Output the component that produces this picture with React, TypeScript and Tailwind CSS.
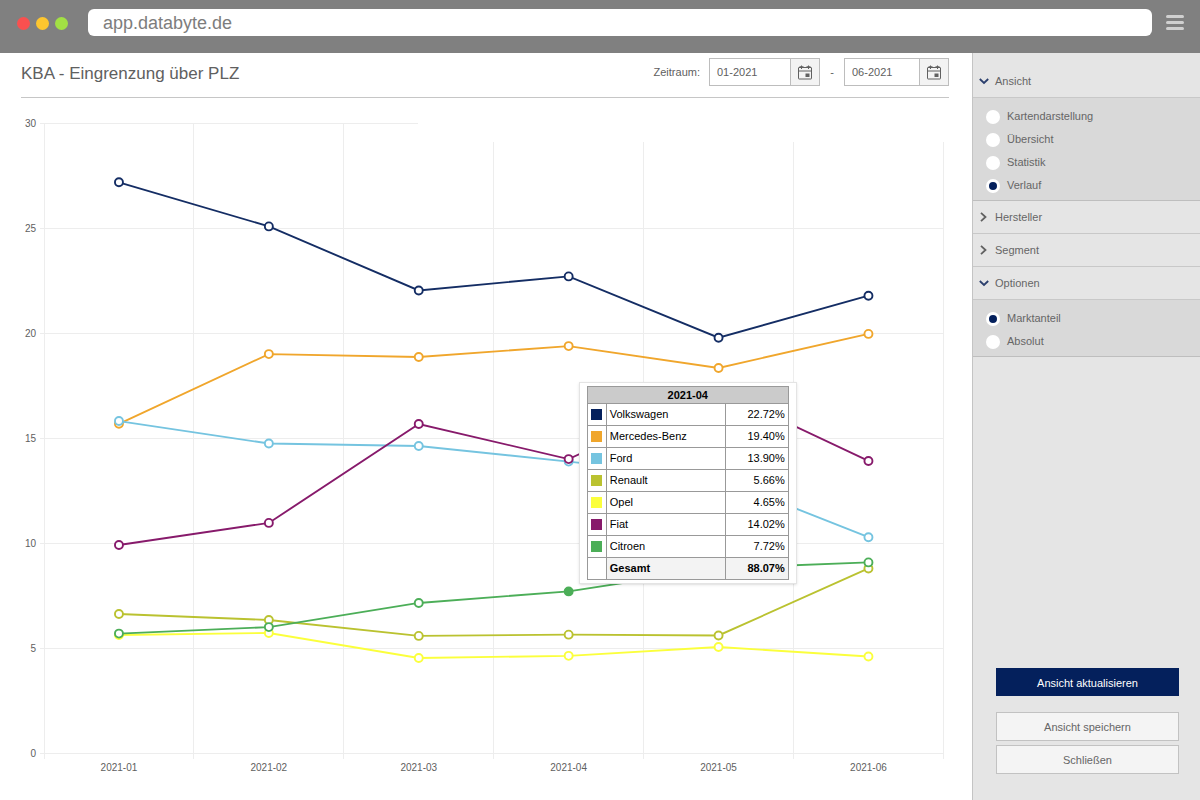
import { useState } from "react";

/**
 * Registration share per brand and month, with the view settings on the right.
 */

const MONTHS = ["2021-01", "2021-02", "2021-03", "2021-04", "2021-05", "2021-06"];
const TICKS = [0, 5, 10, 15, 20, 25, 30];
const ACTIVE_MONTH = 3;

type Series = {
  name: string;
  color: string;
  line?: string;
  values: number[];
};

const SERIES: Series[] = [
  { name: "Volkswagen", color: "#04205c", line: "#142d64", values: [27.2, 25.1, 22.05, 22.72, 19.8, 21.8] },
  { name: "Mercedes-Benz", color: "#f0a62c", values: [15.7, 19.02, 18.88, 19.4, 18.36, 19.98] },
  { name: "Ford", color: "#75c4e0", values: [15.83, 14.76, 14.64, 13.9, 13.12, 10.3] },
  { name: "Renault", color: "#bac230", values: [6.64, 6.36, 5.6, 5.66, 5.62, 8.81] },
  { name: "Opel", color: "#fbff3c", values: [5.64, 5.74, 4.55, 4.65, 5.07, 4.62] },
  { name: "Fiat", color: "#871a6b", values: [9.93, 10.98, 15.69, 14.02, 17.3, 13.93] },
  { name: "Citroen", color: "#4cae58", values: [5.71, 6.02, 7.17, 7.72, 8.82, 9.1] },
];

// Back to front
const DRAW_ORDER = [4, 3, 0, 1, 2, 5, 6];

// Plot geometry in viewBox units
const LEFT = 23;
const STEP = 149.9;
const BOTTOM = 645.5;
const UNIT = 21;

const xAt = (i: number) => LEFT + STEP * (i + 0.5);
const yAt = (v: number) => BOTTOM - v * UNIT;

function Chart() {
  return (
    <svg viewBox="0 0 928 680" className="block w-full" role="img" aria-label="Verlauf der Marktanteile">
      <g stroke="#ededed" shapeRendering="crispEdges">
        {TICKS.map((t) => (
          <line key={t} x1={LEFT - 4} x2={t === 30 ? 397 : LEFT + STEP * 6} y1={yAt(t)} y2={yAt(t)} />
        ))}
        {Array.from({ length: 7 }, (_, i) => (
          <line key={i} x1={LEFT + STEP * i} x2={LEFT + STEP * i} y1={i < 3 ? 15.5 : 33.5} y2={BOTTOM + 5} />
        ))}
      </g>
      <g fontSize="10" fill="#606060">
        {TICKS.map((t) => (
          <text key={t} x="15" y={yAt(t) + 3} textAnchor="end">
            {t}
          </text>
        ))}
        {MONTHS.map((m, i) => (
          <text key={m} x={xAt(i)} y="663" textAnchor="middle">
            {m}
          </text>
        ))}
      </g>
      {DRAW_ORDER.map((n) => {
        const s = SERIES[n];
        return (
          <g key={s.name} stroke={s.line ?? s.color} strokeWidth="1.9">
            <polyline fill="none" points={s.values.map((v, i) => `${xAt(i)},${yAt(v)}`).join(" ")} />
            {s.values.map((v, i) => (
              <circle
                key={i}
                cx={xAt(i)}
                cy={yAt(v)}
                r="4"
                fill={s.name === "Citroen" && i === ACTIVE_MONTH ? s.color : "#fff"}
              />
            ))}
          </g>
        );
      })}
    </svg>
  );
}

function ChartTooltip() {
  const total = SERIES.reduce((sum, s) => sum + s.values[ACTIVE_MONTH], 0);

  return (
    <div className="absolute left-[60.1%] top-[274px] w-[218px] border border-[#e4e4e4] bg-white px-[7px] py-[3px] shadow-sm">
      <table className="w-full border-collapse text-[11px] leading-4 text-black">
        <thead>
          <tr className="h-[17px]">
            <th colSpan={3} className="border border-[#999] bg-[#cbcbcb] p-0 font-bold leading-[14px]">
              {MONTHS[ACTIVE_MONTH]}
            </th>
          </tr>
        </thead>
        <tbody>
          {SERIES.map((s) => (
            <tr key={s.name} className="h-[22px]">
              <td className="w-[19px] border border-[#999] p-0">
                <div className="mx-auto size-[11px]" style={{ backgroundColor: s.color }} />
              </td>
              <td className="border border-[#999] px-[3px] pb-[2px] pt-0">{s.name}</td>
              <td className="w-[63px] border border-[#999] px-[3px] pb-[2px] pt-0 text-right">
                {s.values[ACTIVE_MONTH].toFixed(2)}%
              </td>
            </tr>
          ))}
          <tr className="h-[22px] font-bold">
            <td className="border border-[#999] p-0" />
            <td className="border border-[#999] bg-[#f3f3f3] px-[3px] pb-[2px] pt-0">Gesamt</td>
            <td className="border border-[#999] bg-[#f3f3f3] px-[3px] pb-[2px] pt-0 text-right">{total.toFixed(2)}%</td>
          </tr>
        </tbody>
      </table>
    </div>
  );
}

function CalendarIcon() {
  return (
    <svg width="14" height="15" viewBox="0 0 14 15" fill="none" stroke="#606060" aria-hidden="true">
      <rect x="0.5" y="2.5" width="13" height="11.5" rx="0.5" />
      <path d="M0.5 6H13.5" />
      <path d="M3.5 0.5V4M10.5 0.5V4" />
      <path d="M1.5 2H5.5M8.5 2H12.5" strokeWidth="1.5" />
      <rect x="7.5" y="8.5" width="4" height="3.5" fill="#606060" stroke="none" />
    </svg>
  );
}

function MonthField({ label, initial, width }: { label: string; initial: string; width: string }) {
  const [value, setValue] = useState(initial);

  return (
    <div className={`flex h-7 border border-[#bdbdbd] ${width}`}>
      <input
        type="text"
        aria-label={label}
        value={value}
        onChange={(e) => setValue(e.target.value)}
        className="min-w-0 flex-1 bg-white px-[7px] text-[11px] text-[#606060] outline-none"
      />
      <button
        type="button"
        aria-label={`${label} wählen`}
        className="flex w-[29px] items-center justify-center border-l border-[#bdbdbd] bg-[#f3f3f3]"
      >
        <CalendarIcon />
      </button>
    </div>
  );
}

function SectionHeader({ title, open, first }: { title: string; open?: boolean; first?: boolean }) {
  return (
    <button
      type="button"
      aria-expanded={!!open}
      className={`flex w-full items-center gap-[6px] border-b border-[#c8c8c8] pl-[6px] text-left ${
        first ? "h-[45px] pt-3" : "h-[33px]"
      }`}
    >
      <svg width="10" height="10" viewBox="0 0 10 10" fill="none" strokeWidth="1.8" aria-hidden="true">
        {open ? <path d="M0.8 3L5 7L9.2 3" stroke="#2b3f6d" /> : <path d="M2 0.8L6.5 5L2 9.2" stroke="#606060" />}
      </svg>
      {title}
    </button>
  );
}

type RadioListProps = {
  name: string;
  options: string[];
  value: string;
  onChange: (value: string) => void;
};

function RadioList({ name, options, value, onChange }: RadioListProps) {
  return (
    <div role="radiogroup" aria-label={name} className="border-b border-[#bebebe] bg-[#d9d9d9] pb-[3px] pl-[13px] pt-[7px]">
      {options.map((option) => (
        <label key={option} className="flex h-[23px] items-center gap-[7px]">
          <input
            type="radio"
            name={name}
            checked={value === option}
            onChange={() => onChange(option)}
            className="size-[14px] appearance-none rounded-full bg-white checked:border-[3px] checked:border-white checked:bg-[#04205c]"
          />
          {option}
        </label>
      ))}
    </div>
  );
}

function Sidebar() {
  const [view, setView] = useState("Verlauf");
  const [mode, setMode] = useState("Marktanteil");

  return (
    <aside className="flex w-[228px] shrink-0 flex-col border-l border-[#c4c4c4] bg-[#e5e5e5] text-[11px] text-[#666]">
      <SectionHeader title="Ansicht" open first />
      <RadioList
        name="Ansicht"
        options={["Kartendarstellung", "Übersicht", "Statistik", "Verlauf"]}
        value={view}
        onChange={setView}
      />
      <SectionHeader title="Hersteller" />
      <SectionHeader title="Segment" />
      <SectionHeader title="Optionen" open />
      <RadioList name="Optionen" options={["Marktanteil", "Absolut"]} value={mode} onChange={setMode} />

      <div className="mt-auto flex flex-col pb-[26px] pl-[23px] pr-[21px]">
        <button type="button" className="mb-4 h-7 bg-[#04205c] pt-[2px] text-white">
          Ansicht aktualisieren
        </button>
        <button type="button" className="mb-1 h-[29px] border border-[#c2c2c2] bg-[#f4f4f4] pt-[2px]">
          Ansicht speichern
        </button>
        <button type="button" className="h-[29px] border border-[#c2c2c2] bg-[#f4f4f4] pt-[2px]">
          Schließen
        </button>
      </div>
    </aside>
  );
}

export default function App() {
  return (
    <div className="flex min-h-screen flex-col bg-white font-['Liberation_Sans',Arial,sans-serif]">
      <header className="flex h-[53px] items-start bg-[#808080] pl-[17px] pr-4 pt-[9px]">
        <div className="mr-5 flex h-[29px] items-center gap-[6px]">
          <span className="size-[13px] rounded-full bg-[#f9504f]" />
          <span className="size-[13px] rounded-full bg-[#fdc62f]" />
          <span className="size-[13px] rounded-full bg-[#a2e044]" />
        </div>
        <input
          type="text"
          aria-label="Adresse"
          defaultValue="app.databyte.de"
          className="h-[27px] min-w-0 flex-1 rounded-md bg-white px-[15px] pt-[2px] text-[18px] text-[#7d7d7d] outline-none"
        />
        <button type="button" aria-label="Menü" className="ml-[14px] flex h-[27px] w-[18px] flex-col justify-center gap-[3px]">
          <span className="h-[3px] rounded-full bg-[#d0d0d0]" />
          <span className="h-[3px] rounded-full bg-[#d0d0d0]" />
          <span className="h-[3px] rounded-full bg-[#d0d0d0]" />
        </button>
      </header>

      <div className="flex flex-1">
        <main className="min-w-0 flex-1 pl-[21px] pr-[23px]">
          <div className="flex h-[45px] items-start justify-between border-b border-[#c6c6c6] pt-[5px]">
            <h1 className="text-[17px] leading-8 text-[#606060]">KBA - Eingrenzung über PLZ</h1>
            <div className="flex items-center text-[11px] text-[#606060]">
              <span className="mr-[9px]">Zeitraum:</span>
              <MonthField label="Von" initial="01-2021" width="w-[111px]" />
              <span className="w-6 text-center">-</span>
              <MonthField label="Bis" initial="06-2021" width="w-[105px]" />
            </div>
          </div>
          <div className="relative mt-[10px]">
            <Chart />
            <ChartTooltip />
          </div>
        </main>
        <Sidebar />
      </div>
    </div>
  );
}
